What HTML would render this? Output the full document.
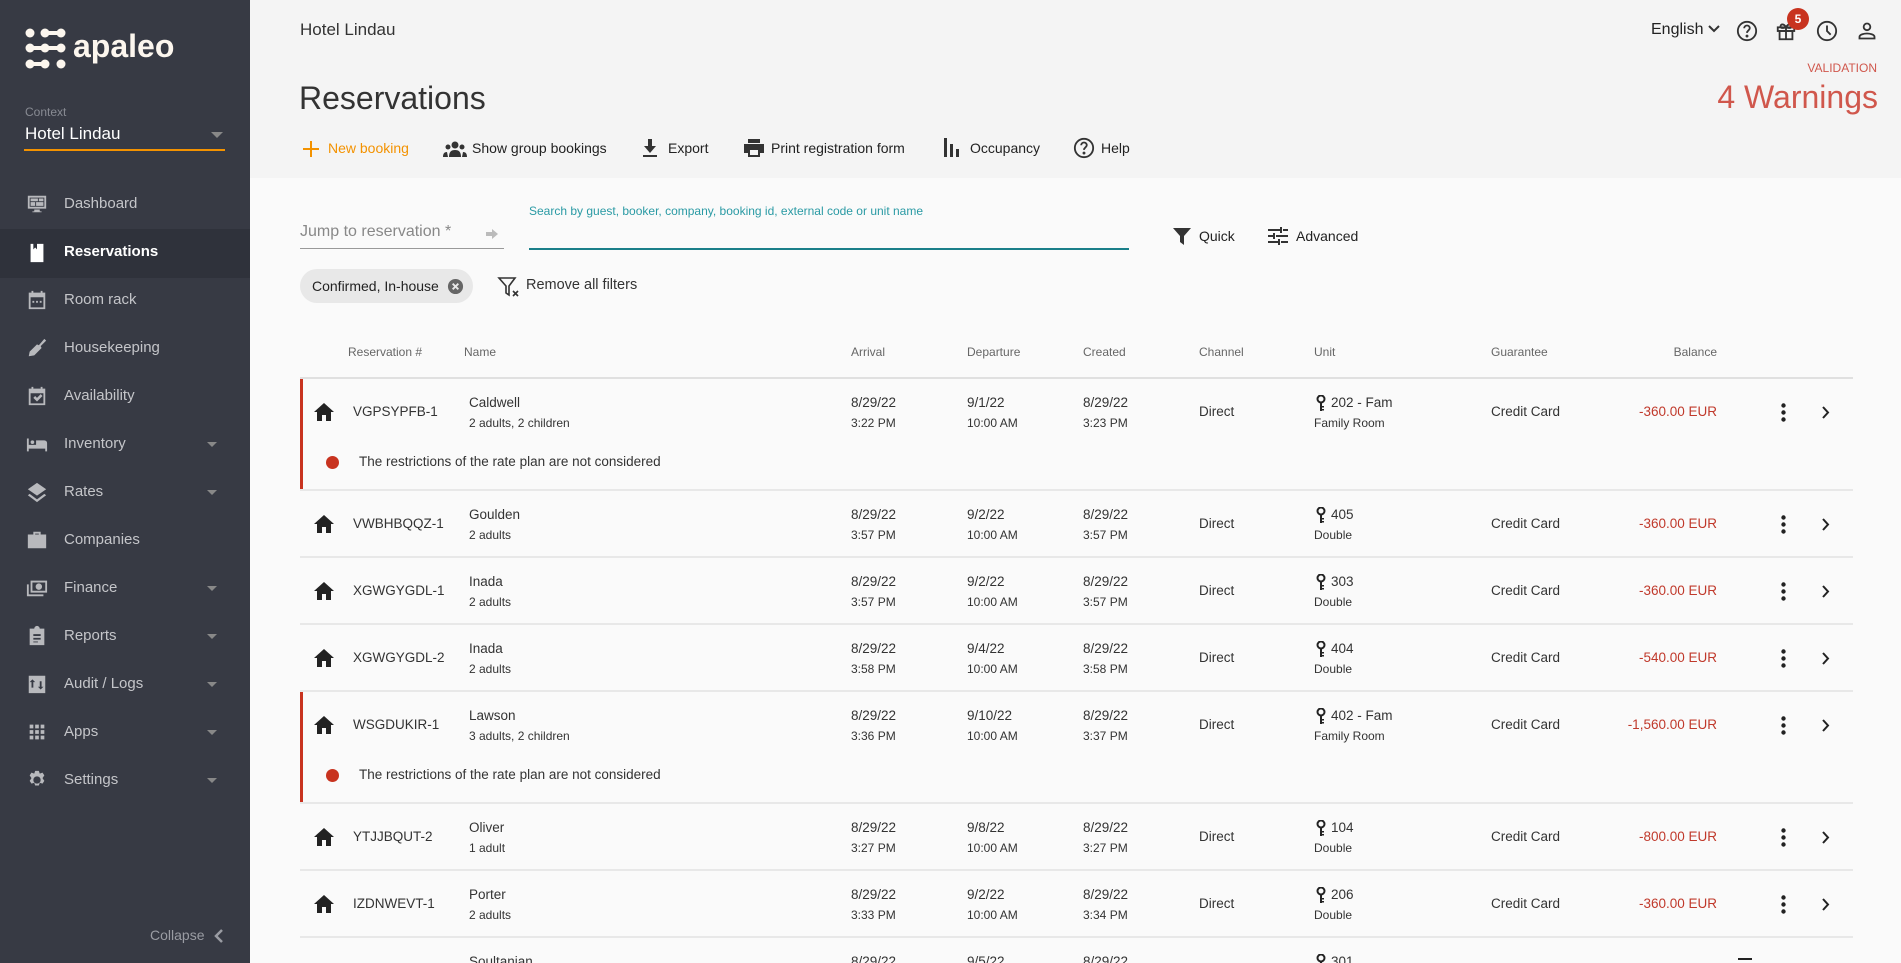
<!DOCTYPE html>
<html><head><meta charset="utf-8"><style>
*{margin:0;padding:0;box-sizing:border-box}
html,body{width:1901px;height:963px;overflow:hidden}
body{font-family:"Liberation Sans",sans-serif;background:#fafafa;color:#212121}
#wrap{position:relative;width:1901px;height:963px;overflow:hidden}
.a{position:absolute;white-space:nowrap}
#sb{position:absolute;left:0;top:0;width:250px;height:963px;background:#373a44}
.nav{position:absolute;left:0;width:250px;height:48px;color:#c4c5c9;font-size:15px}
.nav .t{position:absolute;left:64px;top:15px}
.nav svg{position:absolute;left:26px;top:13px}
.nav .c{position:absolute;left:207px;top:22px;border-left:5px solid transparent;border-right:5px solid transparent;border-top:5px solid #888}
.hdr{position:absolute;left:250px;top:0;width:1651px;height:178px;background:#f4f4f4}
.tb{font-size:14px;color:#222;top:140px}
.th{font-size:12px;color:#666;top:345px}
.m{font-size:13.5px;color:#333}
.s{font-size:12px;color:#333}
.red{color:#c0392b}
</style></head><body><div id="wrap">
<div id="sb">
 <svg class="a" style="left:25px;top:28px" width="42" height="42" viewBox="0 0 42 42" fill="#fcf6ee">
  <circle cx="5" cy="5" r="4.5"/><circle cx="20" cy="5" r="4.5"/><circle cx="36" cy="5" r="4.5"/><rect x="20" y="3" width="16" height="4"/>
  <circle cx="5" cy="20" r="4.5"/><circle cx="20" cy="20" r="4.5"/><circle cx="36" cy="20" r="4.5"/><rect x="5" y="18" width="31" height="4"/>
  <circle cx="5" cy="36" r="4.5"/><circle cx="20" cy="36" r="4.5"/><circle cx="36" cy="36" r="4.5"/><rect x="5" y="34" width="15" height="4"/>
 </svg>
 <div class="a" style="left:73px;top:28px;font-size:32px;font-weight:bold;color:#fcf6ee">apaleo</div>
 <div class="a" style="left:25px;top:105px;font-size:12px;color:#888b93">Context</div>
 <div class="a" style="left:25px;top:124px;font-size:17px;color:#fff">Hotel Lindau</div>
 <div class="a" style="left:211px;top:132px;border-left:6px solid transparent;border-right:6px solid transparent;border-top:6px solid #888"></div>
 <div class="a" style="left:24px;top:149px;width:201px;height:2px;background:#f39200"></div>

 <div class="nav" style="top:180px"><svg width="22" height="22" viewBox="0 0 24 24" fill="#b8b9bd"><path d="M2 3h20v14H2zM4 5v10h16V5zM5 6h8v3H5zM14 6h5v3h-5zM5 10h5v4H5zM11 10h8v4h-8zM9 18h6v2h2v1H7v-1h2z"/></svg><span class="t">Dashboard</span></div>
 <div class="nav" style="top:229px;height:49px;background:#2f323b;color:#fff"><svg width="22" height="22" viewBox="0 0 24 24" fill="#fff"><path d="M5 2h3v6l2-2 2 2V2h7v20H5z"/></svg><span class="t" style="font-weight:bold;top:14px">Reservations</span></div>
 <div class="nav" style="top:276px"><svg width="22" height="22" viewBox="0 0 24 24" fill="#b8b9bd"><path d="M3 4h3V2h2v2h8V2h2v2h3v18H3zM5 9v11h14V9zM7 13h2v2H7zm4 0h2v2h-2zm4 0h2v2h-2z"/></svg><span class="t">Room rack</span></div>
 <div class="nav" style="top:324px"><svg width="22" height="22" viewBox="0 0 24 24" fill="#b8b9bd"><path d="M20 2l2 2-6 6 1 2-8 8-6 1 1-5 8-8 2 1z"/></svg><span class="t">Housekeeping</span></div>
 <div class="nav" style="top:372px"><svg width="22" height="22" viewBox="0 0 24 24" fill="#b8b9bd"><path d="M3 4h3V2h2v2h8V2h2v2h3v18H3zM5 9v11h14V9zm3 5l2-2 2 2 4-4 2 2-6 6z"/></svg><span class="t">Availability</span></div>
 <div class="nav" style="top:420px"><svg width="22" height="22" viewBox="0 0 24 24" fill="#b8b9bd"><path d="M1 6h2v7h8V8h9a3 3 0 013 3v9h-2v-3H3v3H1zM7 8a2 2 0 110 4 2 2 0 010-4z"/></svg><span class="t">Inventory</span><span class="c"></span></div>
 <div class="nav" style="top:468px"><svg width="22" height="22" viewBox="0 0 24 24" fill="#b8b9bd"><path d="M12 2l10 7-10 7L2 9zM4 14l8 6 8-6 2 1.5L12 23 2 15.5z"/></svg><span class="t">Rates</span><span class="c"></span></div>
 <div class="nav" style="top:516px"><svg width="22" height="22" viewBox="0 0 24 24" fill="#b8b9bd"><path d="M8 3h8v3h6v15H2V6h6zm2 2v1h4V5z"/></svg><span class="t">Companies</span></div>
 <div class="nav" style="top:564px"><svg width="22" height="22" viewBox="0 0 24 24" fill="#b8b9bd"><path d="M5 4h18v13H5zm2 2v9h14V6zm7 1a3.5 3.5 0 110 7 3.5 3.5 0 010-7zM1 8h2v11h16v2H1z"/></svg><span class="t">Finance</span><span class="c"></span></div>
 <div class="nav" style="top:612px"><svg width="22" height="22" viewBox="0 0 24 24" fill="#b8b9bd"><path d="M4 4h5a3 3 0 016 0h5v18H4zm4 6v2h8v-2zm0 4v2h8v-2zm0 4v1h5v-1z"/></svg><span class="t">Reports</span><span class="c"></span></div>
 <div class="nav" style="top:660px"><svg width="22" height="22" viewBox="0 0 24 24" fill="#b8b9bd"><path d="M3 3h18v19H3zm4 4l-3 3h2v6h2v-6h2zm8 2v6h-2l3 3 3-3h-2V9z"/></svg><span class="t">Audit / Logs</span><span class="c"></span></div>
 <div class="nav" style="top:708px"><svg width="22" height="22" viewBox="0 0 24 24" fill="#b8b9bd"><path d="M4 4h4v4H4zm6 0h4v4h-4zm6 0h4v4h-4zM4 10h4v4H4zm6 0h4v4h-4zm6 0h4v4h-4zM4 16h4v4H4zm6 0h4v4h-4zm6 0h4v4h-4z"/></svg><span class="t">Apps</span><span class="c"></span></div>
 <div class="nav" style="top:756px"><svg width="22" height="22" viewBox="0 0 24 24" fill="#b8b9bd"><path d="M10 2h4l1 3 3-1 2 3-2 3 2 3-2 3-3-1-1 3h-4l-1-3-3 1-2-3 2-3-2-3 2-3 3 1zm2 6a4 4 0 100 8 4 4 0 000-8z"/></svg><span class="t">Settings</span><span class="c"></span></div>
 <div class="a" style="left:150px;top:927px;font-size:14px;color:#9a9ca3">Collapse</div>
 <svg class="a" style="left:214px;top:929px" width="10" height="14" viewBox="0 0 10 14"><path d="M8 1L2 7l6 6" stroke="#9a9ca3" stroke-width="2.5" fill="none"/></svg>
</div>

<div class="hdr"></div>
<div class="a" style="left:300px;top:20px;font-size:17px;color:#333">Hotel Lindau</div>
<div class="a" style="left:299px;top:80px;font-size:32px;color:#333">Reservations</div>
<div class="a" style="left:1651px;top:21px;font-size:16px;color:#222">English</div>
<svg class="a" style="left:1708px;top:24px" width="12" height="10" viewBox="0 0 12 10"><path d="M1 2l5 5 5-5" stroke="#333" stroke-width="2" fill="none"/></svg>
<svg class="a" style="left:1736px;top:20px" width="22" height="22" viewBox="0 0 24 24" fill="none" stroke="#333" stroke-width="2"><circle cx="12" cy="12" r="10"/><path d="M9 9a3 3 0 116 0c0 2-3 2.5-3 5"/><circle cx="12" cy="17.5" r="0.6" fill="#333"/></svg>
<svg class="a" style="left:1775px;top:20px" width="22" height="22" viewBox="0 0 24 24" fill="none" stroke="#333" stroke-width="2"><rect x="3" y="8" width="18" height="4"/><rect x="5" y="12" width="14" height="9"/><path d="M12 8v13M12 8c-2-4-6-4-6-1s6 1 6 1c2-4 6-4 6-1s-6 1-6 1"/></svg>
<div class="a" style="left:1787px;top:8px;width:22px;height:22px;border-radius:11px;background:#c8331f;color:#fff;font-size:12px;font-weight:bold;text-align:center;line-height:22px">5</div>
<svg class="a" style="left:1816px;top:20px" width="22" height="22" viewBox="0 0 24 24" fill="none" stroke="#333" stroke-width="2"><circle cx="12" cy="12" r="10"/><path d="M12 6v6l4 4"/></svg>
<svg class="a" style="left:1857px;top:21px" width="20" height="20" viewBox="0 0 24 24" fill="none" stroke="#333" stroke-width="2.2"><circle cx="12" cy="7" r="4"/><path d="M3 21v-2c0-3 6-4 9-4s9 1 9 4v2z"/></svg>
<div class="a" style="right:24px;top:61px;font-size:12px;color:#d0574c">VALIDATION</div>
<div class="a" style="right:23px;top:79px;font-size:32px;color:#d0574c">4 Warnings</div>

<svg class="a" style="left:302px;top:140px" width="18" height="18" viewBox="0 0 18 18"><path d="M9 1v16M1 9h16" stroke="#f39200" stroke-width="2"/></svg>
<div class="a tb" style="left:328px;color:#f39200">New booking</div>
<svg class="a" style="left:443px;top:140px" width="24" height="18" viewBox="0 0 24 18" fill="#333"><circle cx="12" cy="5" r="3.5"/><circle cx="5" cy="7" r="2.5"/><circle cx="19" cy="7" r="2.5"/><path d="M6 17c0-5 2-7 6-7s6 2 6 7zM0 17c0-3 1-5 4-5l1 5zM24 17c0-3-1-5-4-5l-1 5z"/></svg>
<div class="a tb" style="left:472px">Show group bookings</div>
<svg class="a" style="left:642px;top:138px" width="16" height="20" viewBox="0 0 16 20" fill="#333"><path d="M6 1h4v7h4l-6 7-6-7h4zM1 17h14v2H1z"/></svg>
<div class="a tb" style="left:668px">Export</div>
<svg class="a" style="left:743px;top:138px" width="22" height="20" viewBox="0 0 22 20" fill="#333"><path d="M5 1h12v4H5zM1 6h20v9h-4v4H5v-4H1zm6 6v5h8v-5z"/></svg>
<div class="a tb" style="left:771px">Print registration form</div>
<svg class="a" style="left:943px;top:137px" width="18" height="20" viewBox="0 0 18 20" fill="#333"><rect x="1" y="1" width="3" height="19"/><rect x="7" y="7" width="3" height="13"/><rect x="13" y="12" width="3" height="8"/></svg>
<div class="a tb" style="left:970px">Occupancy</div>
<svg class="a" style="left:1073px;top:137px" width="22" height="22" viewBox="0 0 24 24" fill="none" stroke="#333" stroke-width="2"><circle cx="12" cy="12" r="10"/><path d="M9 9a3 3 0 116 0c0 2-3 2.5-3 5"/><circle cx="12" cy="17.5" r="0.6" fill="#333"/></svg>
<div class="a tb" style="left:1101px">Help</div>

<div class="a" style="left:300px;top:223px;font-size:16px;color:#888">Jump to reservation *</div>
<svg class="a" style="left:486px;top:229px" width="12" height="10" viewBox="0 0 12 10" fill="#bbb"><path d="M0 3h6V0l6 5-6 5V7H0z"/></svg>
<div class="a" style="left:300px;top:248px;width:204px;height:1px;background:#999"></div>
<div class="a" style="left:529px;top:204px;font-size:12px;color:#2a9aa4">Search by guest, booker, company, booking id, external code or unit name</div>
<div class="a" style="left:529px;top:248px;width:600px;height:2px;background:#1a7f89"></div>
<svg class="a" style="left:1173px;top:227px" width="18" height="18" viewBox="0 0 18 18" fill="#333"><path d="M0 1h18l-7 8v9l-4-3V9z"/></svg>
<div class="a" style="left:1199px;top:228px;font-size:14px;color:#222">Quick</div>
<svg class="a" style="left:1268px;top:226px" width="20" height="20" viewBox="0 0 20 20" fill="#333"><path d="M0 3h12v2H0zM15 3h5v2h-5zM12 1h2v6h-2zM0 9h5v2H0zM8 9h12v2H8zM5 7h2v6H5zM0 15h10v2H0zM13 15h7v2h-7zM10 13h2v6h-2z"/></svg>
<div class="a" style="left:1296px;top:228px;font-size:14px;color:#222">Advanced</div>
<div class="a" style="left:300px;top:269px;width:173px;height:34px;border-radius:17px;background:#e8e8e8"></div>
<div class="a" style="left:312px;top:278px;font-size:14px;color:#222">Confirmed, In-house</div>
<svg class="a" style="left:447px;top:278px" width="17" height="17" viewBox="0 0 18 18"><circle cx="9" cy="9" r="8" fill="#666"/><path d="M6 6l6 6M12 6l-6 6" stroke="#e8e8e8" stroke-width="2"/></svg>
<svg class="a" style="left:497px;top:275px" width="24" height="24" viewBox="0 0 24 24" fill="none" stroke="#333" stroke-width="1.6"><path d="M2 3h16l-6 8v9l-3-2v-7z"/><path d="M16 16l5 5M21 16l-5 5"/></svg>
<div class="a" style="left:526px;top:277px;font-size:14.5px;color:#333">Remove all filters</div>

<div class="a th" style="left:348px">Reservation #</div>
<div class="a th" style="left:464px">Name</div>
<div class="a th" style="left:851px">Arrival</div>
<div class="a th" style="left:967px">Departure</div>
<div class="a th" style="left:1083px">Created</div>
<div class="a th" style="left:1199px">Channel</div>
<div class="a th" style="left:1314px">Unit</div>
<div class="a th" style="left:1491px">Guarantee</div>
<div class="a th" style="left:1650px;width:67px;text-align:right">Balance</div>
<div class="a" style="left:300px;top:377px;width:1553px;height:2px;background:#e0e0e0"></div>

<div id="rows"></div>
</div>
<script>
var R=[
[379,112,1,"VGPSYPFB-1","Caldwell","2 adults, 2 children","8/29/22","3:22 PM","9/1/22","8/29/22","3:23 PM","202 - Fam","Family Room","-360.00 EUR"],
[491,67,0,"VWBHBQQZ-1","Goulden","2 adults","8/29/22","3:57 PM","9/2/22","8/29/22","3:57 PM","405","Double","-360.00 EUR"],
[558,67,0,"XGWGYGDL-1","Inada","2 adults","8/29/22","3:57 PM","9/2/22","8/29/22","3:57 PM","303","Double","-360.00 EUR"],
[625,67,0,"XGWGYGDL-2","Inada","2 adults","8/29/22","3:58 PM","9/4/22","8/29/22","3:58 PM","404","Double","-540.00 EUR"],
[692,112,1,"WSGDUKIR-1","Lawson","3 adults, 2 children","8/29/22","3:36 PM","9/10/22","8/29/22","3:37 PM","402 - Fam","Family Room","-1,560.00 EUR"],
[804,67,0,"YTJJBQUT-2","Oliver","1 adult","8/29/22","3:27 PM","9/8/22","8/29/22","3:27 PM","104","Double","-800.00 EUR"],
[871,67,0,"IZDNWEVT-1","Porter","2 adults","8/29/22","3:33 PM","9/2/22","8/29/22","3:34 PM","206","Double","-360.00 EUR"],
[938,67,0,"","Soultanian","","8/29/22","","9/5/22","8/29/22","","301","",""]
];
var h="";
R.forEach(function(r){
 var t=r[0],c=t+25,o=t+16,s=t+37;
 if(r[2])h+='<div class="a" style="left:300px;top:'+t+'px;width:3px;height:'+r[1]+'px;background:#c8331f"></div>';
 h+='<div class="a" style="left:300px;top:'+(t+r[1]-2)+'px;width:1553px;height:2px;background:#e8e8e8"></div>';
 if(r[3])h+='<svg class="a" style="left:314px;top:'+(c-1)+'px" width="20" height="18" viewBox="0 0 20 18" fill="#222"><path d="M10 0l10 9h-3v9h-5v-6H8v6H3V9H0z"/></svg>';
 h+='<div class="a m" style="left:353px;top:'+c+'px">'+r[3]+'</div>';
 h+='<div class="a m" style="left:469px;top:'+o+'px">'+r[4]+'</div><div class="a s" style="left:469px;top:'+s+'px">'+r[5]+'</div>';
 h+='<div class="a m" style="left:851px;top:'+o+'px">'+r[6]+'</div><div class="a s" style="left:851px;top:'+s+'px">'+r[7]+'</div>';
 h+='<div class="a m" style="left:967px;top:'+o+'px">'+r[8]+'</div><div class="a s" style="left:967px;top:'+s+'px">'+(r[7]?"10:00 AM":"")+'</div>';
 h+='<div class="a m" style="left:1083px;top:'+o+'px">'+r[9]+'</div><div class="a s" style="left:1083px;top:'+s+'px">'+r[10]+'</div>';
 if(r[3])h+='<div class="a m" style="left:1199px;top:'+c+'px">Direct</div><div class="a m" style="left:1491px;top:'+c+'px">Credit Card</div>';
 h+='<svg class="a" style="left:1316px;top:'+(o)+'px" width="10" height="17" viewBox="0 0 10 17" fill="#222"><circle cx="5" cy="4" r="3.5" fill="none" stroke="#222" stroke-width="2"/><path d="M4 7h2v9H4zM6 11h2v1.5H6zM6 14h2v1.5H6z"/></svg>';
 h+='<div class="a m" style="left:1331px;top:'+o+'px">'+r[11]+'</div><div class="a s" style="left:1314px;top:'+s+'px">'+r[12]+'</div>';
 if(r[3]){h+='<div class="a m red" style="left:1600px;width:117px;text-align:right;top:'+c+'px">'+r[13]+'</div>';
 h+='<svg class="a" style="left:1781px;top:'+(c-1)+'px" width="5" height="19" viewBox="0 0 5 19" fill="#222"><circle cx="2.5" cy="2.5" r="2.2"/><circle cx="2.5" cy="9.5" r="2.2"/><circle cx="2.5" cy="16.5" r="2.2"/></svg>';
 h+='<svg class="a" style="left:1821px;top:'+(c+2)+'px" width="9" height="13" viewBox="0 0 9 13"><path d="M2 1l5 5.5L2 12" stroke="#222" stroke-width="2" fill="none"/></svg>';}
 else h+='<div class="a" style="left:1738px;top:'+(t+20)+'px;width:14px;height:2px;background:#222"></div>';
 if(r[2]){h+='<div class="a" style="left:326px;top:'+(t+77)+'px;width:13px;height:13px;border-radius:7px;background:#c8331f"></div>';
 h+='<div class="a m" style="left:359px;top:'+(t+75)+'px">The restrictions of the rate plan are not considered</div>';}
});
document.getElementById("rows").innerHTML=h;
</script>
</body></html>
